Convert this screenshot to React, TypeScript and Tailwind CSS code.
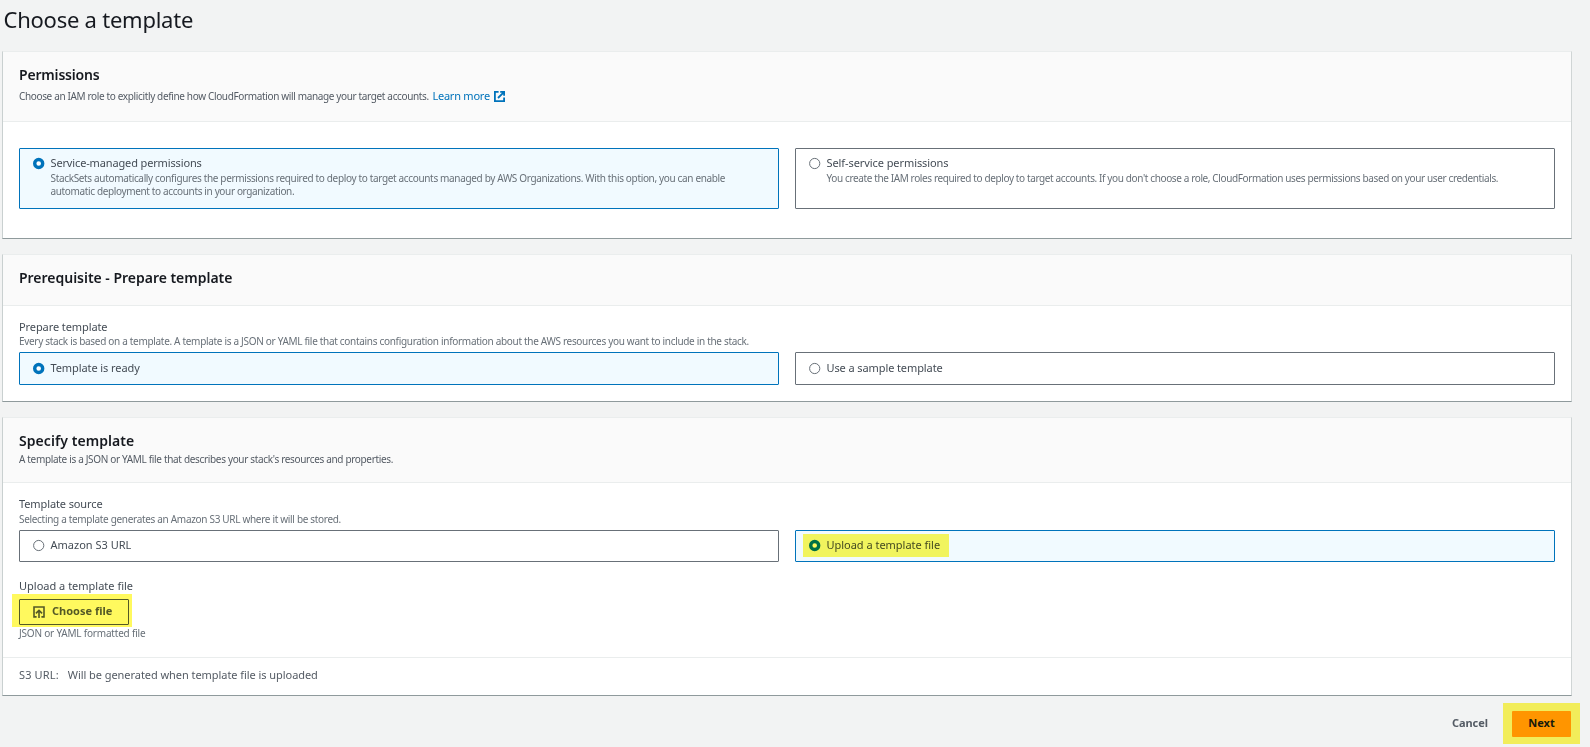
import React from 'react';
import clsx from 'clsx';

const HINT = 'text-[10px] leading-[14px]';
const LABEL = 'text-[11px] leading-[14px] text-[#444c55]';

const ExternalIcon: React.FC = () => (
    <svg className="ml-1 h-[11px] w-[11px]" viewBox="0 0 11 11" fill="none" stroke="#0073bb" strokeWidth="1.8">
        <path d="M4.6 0.9H0.9v9.2h9.2V6.6" />
        <path d="M6.2 0.9h3.9v3.9M9.9 1.1L4 7" />
    </svg>
);

const UploadIcon: React.FC = () => (
    <svg className="h-3 w-3" viewBox="0 0 12 12" fill="none" stroke="#545b64" strokeWidth="1.6">
        <path d="M3.6 10.9H1V1h10v9.9H8.4" />
        <path d="M6 12V4.6M2.9 7.4L6 4.4l3.1 3" />
    </svg>
);

const Radio: React.FC<{ checked?: boolean }> = ({ checked }) => (
    <svg className="mt-px h-[13px] w-3 shrink-0" viewBox="0 0 12 13" fill="none">
        {checked ? (
            <circle cx="5.7" cy="6.5" r="4" fill="#fff" stroke="#0073bb" strokeWidth="3.4" />
        ) : (
            <circle cx="5.7" cy="6.5" r="5.1" fill="#fff" stroke="#687078" strokeWidth="1" />
        )}
    </svg>
);

interface TileProps {
    checked?: boolean;
    label: string;
    labelClass?: string;
    className: string;
    children?: React.ReactNode;
}

const Tile: React.FC<TileProps> = ({ checked, label, labelClass, className, children }) => (
    <div
        className={clsx(
            'relative flex items-start gap-[5.5px] rounded-[1px] border pr-3 pl-[13px]',
            checked ? 'border-[#0073bb] bg-[#f1faff]' : 'border-[#687078] bg-white',
            className
        )}
    >
        <Radio checked={checked} />
        <div className="whitespace-nowrap">
            <div className={clsx(LABEL, labelClass)}>{label}</div>
            {children}
        </div>
    </div>
);

// Marker-pen highlight laid over a control
const Marker: React.FC<{ className: string }> = ({ className }) => (
    <div className={clsx('pointer-events-none absolute bg-[#fff95e] mix-blend-multiply', className)} />
);

const Panel: React.FC<{ children: React.ReactNode }> = ({ children }) => (
    <section className="mb-[15px] w-[1570px] border border-t-[#eaeded] border-r-[#d0d5d5] border-b-[#8f9a9c] border-l-[#c9d0d0] bg-white">
        {children}
    </section>
);

const PanelHeader: React.FC<{ title: string; titleClass: string; className: string; children?: React.ReactNode }> = ({
    title,
    titleClass,
    className,
    children,
}) => (
    <header className={clsx('border-b border-[#eaeded] bg-[#fafafa] px-4 pt-[15px]', className)}>
        <h2 className={clsx('text-[14px] leading-4 font-semibold text-[#16191f]', titleClass)}>{title}</h2>
        {children}
    </header>
);

const App: React.FC = () => {
    return (
        <div className="h-[747px] w-[1590px] overflow-hidden bg-[#f2f3f3] pl-0.5 font-['Noto_Sans',sans-serif] text-[#545b64]">
            <h1 className="h-[51px] pt-[5px] pl-[1.5px] text-[22px] leading-7 tracking-[-0.24px] text-[#16191f]">
                Choose a template
            </h1>

            <Panel>
                <PanelHeader title="Permissions" titleClass="tracking-[-0.18px]" className="h-[70px]">
                    <div className="mt-1.5 flex items-center">
                        <p className={clsx(HINT, 'tracking-[-0.355px]')}>
                            Choose an IAM role to explicitly define how CloudFormation will manage your target accounts.
                        </p>
                        <a className="ml-[3.5px] flex items-center text-[11px] leading-[14px] tracking-[-0.23px] text-[#0073bb]">
                            Learn more
                            <ExternalIcon />
                        </a>
                    </div>
                </PanelHeader>
                <div className="grid grid-cols-2 gap-4 px-4 pt-[26px] pb-[29px]">
                    <Tile
                        checked
                        label="Service-managed permissions"
                        labelClass="tracking-[-0.14px]"
                        className="h-[61px] pt-[7px]"
                    >
                        <p className="mt-0.5 text-[10px] leading-[13px] text-[#687078]">
                            <span className="tracking-[-0.343px]">
                                StackSets automatically configures the permissions required to deploy to target accounts
                                managed by AWS Organizations. With this option, you can enable
                            </span>
                            <br />
                            <span className="tracking-[-0.36px]">
                                automatic deployment to accounts in your organization.
                            </span>
                        </p>
                    </Tile>
                    <Tile label="Self-service permissions" labelClass="tracking-[-0.08px]" className="h-[61px] pt-[7px]">
                        <p className="mt-0.5 text-[10px] leading-[13px] tracking-[-0.379px] text-[#687078]">
                            You create the IAM roles required to deploy to target accounts. If you don't choose a role,
                            CloudFormation uses permissions based on your user credentials.
                        </p>
                    </Tile>
                </div>
            </Panel>

            <Panel>
                <PanelHeader
                    title="Prerequisite - Prepare template"
                    titleClass="tracking-[-0.02px]"
                    className="h-[51px]"
                />
                <div className="px-4 pt-3.5 pb-4">
                    <div className={clsx(LABEL, 'tracking-[-0.09px]')}>Prepare template</div>
                    <p className={clsx(HINT, 'tracking-[-0.31px] text-[#687078]')}>
                        Every stack is based on a template. A template is a JSON or YAML file that contains
                        configuration information about the AWS resources you want to include in the stack.
                    </p>
                    <div className="mt-1 grid grid-cols-2 gap-4">
                        <Tile
                            checked
                            label="Template is ready"
                            labelClass="tracking-[-0.09px]"
                            className="h-[33px] pt-2"
                        />
                        <Tile label="Use a sample template" labelClass="tracking-[-0.1px]" className="h-[33px] pt-2" />
                    </div>
                </div>
            </Panel>

            <Panel>
                <PanelHeader title="Specify template" titleClass="tracking-[0.07px]" className="h-[65px]">
                    <p className={clsx(HINT, 'mt-[3px] tracking-[-0.33px]')}>
                        A template is a JSON or YAML file that describes your stack's resources and properties.
                    </p>
                </PanelHeader>
                <div className="px-4 pt-3.5 pb-[17px]">
                    <div className={clsx(LABEL, 'tracking-[-0.11px]')}>Template source</div>
                    <p className={clsx(HINT, 'mt-px tracking-[-0.314px] text-[#687078]')}>
                        Selecting a template generates an Amazon S3 URL where it will be stored.
                    </p>
                    <div className="mt-1 grid grid-cols-2 gap-4">
                        <Tile label="Amazon S3 URL" className="h-8 pt-[7px]" />
                        <Tile
                            checked
                            label="Upload a template file"
                            labelClass="tracking-[-0.02px]"
                            className="h-8 pt-[7px]"
                        >
                            <Marker className="top-[3px] left-[7px] h-[23px] w-[146px]" />
                        </Tile>
                    </div>

                    <div className={clsx(LABEL, 'mt-[17px]')}>Upload a template file</div>
                    <div className="relative mt-1.5 w-[110px]">
                        <button className="flex h-[26px] w-[110px] items-center gap-[7px] rounded-[1px] border border-[#545b64] bg-white pb-0.5 pl-[13px] text-[11px] leading-[14px] font-bold whitespace-nowrap">
                            <span className="pt-0.5">
                                <UploadIcon />
                            </span>
                            Choose file
                        </button>
                        <Marker className="-top-[5px] -left-[7px] h-[33px] w-[120px]" />
                    </div>
                    <p className={clsx(HINT, 'mt-px tracking-[-0.2px] text-[#687078]')}>JSON or YAML formatted file</p>
                </div>
                <div className="flex h-[38px] gap-[9px] border-t border-[#eaeded] px-4 pt-2.5 text-[11px] leading-[14px]">
                    <span className="tracking-[0.14px]">S3 URL:</span>
                    <span className="tracking-[-0.056px]">Will be generated when template file is uploaded</span>
                </div>
            </Panel>

            <div className="flex w-[1569px] items-center justify-end gap-6 text-[11px] leading-[14px] font-bold">
                <button className="pb-0.5 tracking-[-0.05px]">Cancel</button>
                <div className="relative">
                    <button className="h-[26px] w-[59px] rounded-[1px] bg-[#ff9900] pb-0.5 text-[#16191f]">Next</button>
                    <Marker className="-top-2 -left-[9px] h-[41px] w-[77px]" />
                </div>
            </div>
        </div>
    );
};

export default App;
